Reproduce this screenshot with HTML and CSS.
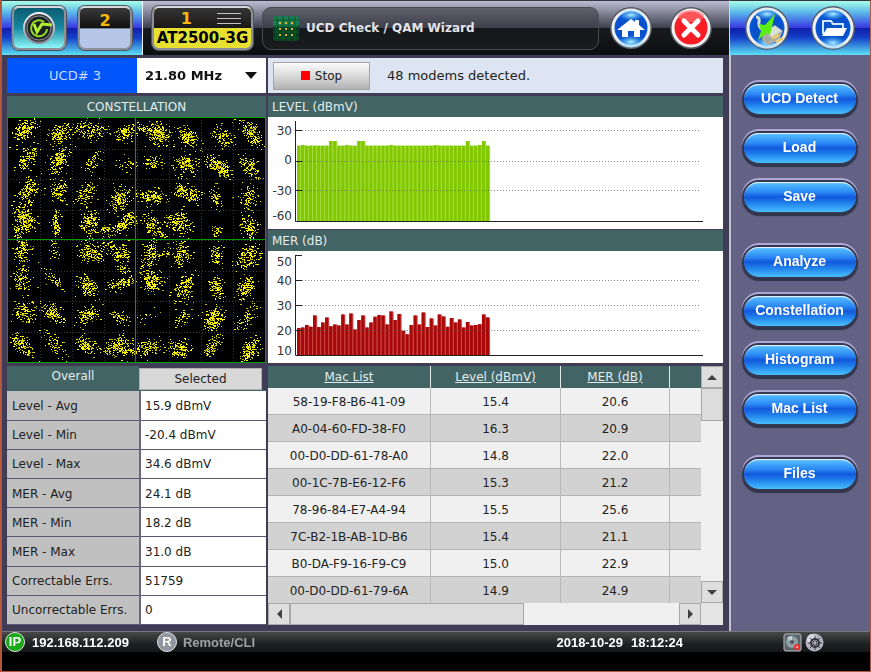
FILE: index.html
```html
<!DOCTYPE html>
<html lang="en">

<head>
    <meta charset="UTF-8">
    <meta name="viewport" content="width=device-width, initial-scale=1.0">
    <title>UCD Check / QAM Wizard</title>
    <link rel="stylesheet" href="styles.css">
</head>

<body>

    <div class="device">
        <header class="topbar">
            <div class="blue-zone slots">
                <button class="slot slot-check" aria-label="System">
                    <svg width="36" height="36" viewBox="0 0 36 36">
                        <defs>
                            <linearGradient id="metal" x1="0" y1="0" x2="0" y2="1">
                                <stop offset="0" stop-color="#f4f4f8" />
                                <stop offset="1" stop-color="#888c96" />
                            </linearGradient>
                            <radialGradient id="blueBall" cx="0.5" cy="0.5" r="0.6">
                                <stop offset="0" stop-color="#0a56c8" />
                                <stop offset="0.6" stop-color="#0650cc" />
                                <stop offset="1" stop-color="#0a64e0" />
                            </radialGradient>
                            <radialGradient id="glow">
                                <stop offset="0" stop-color="#b4f4ff" />
                                <stop offset="1" stop-color="#40b0ff" stop-opacity="0" />
                            </radialGradient>
                        </defs>
                        <circle cx="18" cy="18" r="15" fill="#3c4046" stroke="url(#metal)" stroke-width="2" />
                        <circle cx="18" cy="18" r="12" fill="#1c2024" stroke="#8c9098" stroke-width="1" />
                        <path d="M26 19a8 8 0 1 1-3-7" fill="none" stroke="#8ed820" stroke-width="2" />
                        <path d="M13 14l3 8 5-8 10 1" fill="none" stroke="#b4ee30" stroke-width="3" />
                    </svg>
                </button>
                <button class="slot slot-two">2</button>
            </div>
            <button class="module">
                <span class="module-top">1
                    <svg width="26" height="14" viewBox="0 0 26 14">
                        <path d="M1 2.500h24M1 7.500h24M1 12.500h24" stroke="#c4c4c8" stroke-width="1" />
                    </svg>
                </span>
                <span class="module-name">AT2500-3G</span>
            </button>
            <div class="title-box">
                <svg width="26" height="25" viewBox="0 0 26 25">
                    <rect width="26" height="25" rx="2" fill="#083c24" />
                    <rect width="26" height="11" rx="2" fill="#1e7a58" />
                    <path d="M4 0v25M10 0v25M16 0v25M22 0v25M0 4h26M0 10h26M0 16h26M0 22h26" stroke="#0a5c20"
                        stroke-width="1" />
                    <path d="M6 7h2M12 7h2M18 7h2M6 13h2M12 13h2M18 13h2M6 19h2M12 19h2M18 19h2" stroke="#e8b820"
                        stroke-width="2" />
                </svg>
                <h1>UCD Check / QAM Wizard</h1>
            </div>
            <button class="round" aria-label="Home">
                <svg width="44" height="44" viewBox="0 0 44 44">
                    <circle cx="22" cy="22" r="21" fill="#55585e" />
                    <circle cx="22" cy="22" r="18" fill="url(#blueBall)" stroke="#f0f0f2" stroke-width="3" />
                    <ellipse cx="22" cy="9" rx="13" ry="6" fill="url(#glow)" />
                    <ellipse cx="22" cy="36" rx="14" ry="7" fill="url(#glow)" />
                    <path d="M8 24L22 13l4 3v-2h4v5l6 5-2 0-3 0v7h-6v-6h-6v6h-6v-7z" fill="#fff" />
                </svg>
            </button>
            <button class="round" aria-label="Close">
                <svg width="44" height="44" viewBox="0 0 44 44">
                    <circle cx="22" cy="22" r="21" fill="#55585e" />
                    <circle cx="22" cy="22" r="18" fill="#fa1c24" stroke="#f0f0f2" stroke-width="3" />
                    <ellipse cx="22" cy="10" rx="13" ry="6" fill="#ff7a80" opacity="0.6" />
                    <path d="M15 15l14 14M29 15L15 29" stroke="#fff" stroke-width="5" stroke-linecap="round" />
                </svg>
            </button>
        </header>

        <div class="blue-zone side-top">
            <button class="round" aria-label="Power">
                <svg width="46" height="46" viewBox="0 0 46 46">
                    <circle cx="23" cy="23" r="22" fill="#55606c" />
                    <circle cx="23" cy="23" r="19" fill="url(#blueBall)" stroke="#f0f0f2" stroke-width="3" />
                    <ellipse cx="23" cy="9" rx="13" ry="6" fill="url(#glow)" />
                    <ellipse cx="23" cy="38" rx="14" ry="7" fill="url(#glow)" />
                    <path d="M12 12q4 0 3 5t5 9" fill="none" stroke="#d8dcd8" stroke-width="3" />
                    <path d="M19 27l12-7 8 6-4 9-11 5-6-5z" fill="#a8aca4" />
                    <path d="M22 26l9-5 7 5-11 6z" fill="#dcded8" />
                    <path d="M28 33l7-3M32 37l7-4" stroke="#e8cc78" stroke-width="3" />
                    <path d="M31 9L21 20l-6-1 2 7-3 9 9-7 3 2z" fill="#5cee10" />
                </svg>
            </button>
            <button class="round" aria-label="Open folder">
                <svg width="46" height="46" viewBox="0 0 46 46">
                    <circle cx="23" cy="23" r="22" fill="#55606c" />
                    <circle cx="23" cy="23" r="19" fill="url(#blueBall)" stroke="#f0f0f2" stroke-width="3" />
                    <ellipse cx="23" cy="9" rx="13" ry="6" fill="url(#glow)" />
                    <ellipse cx="23" cy="38" rx="14" ry="7" fill="url(#glow)" />
                    <path d="M13 29V16h8l2 3h10v4" fill="none" stroke="#d4e6fa" stroke-width="2" />
                    <path d="M17 23h20l-4 8H12z" fill="#fff" />
                </svg>
            </button>
        </div>

        <main class="workspace">
            <div class="channel">
                <label for="freq">UCD# 3</label>
                <div class="select-wrap">
                    <select id="freq">
                        <option>21.80 MHz</option>
                    </select>
                </div>
            </div>
            <div class="status-row">
                <button class="stop">Stop</button>
                <span>48 modems detected.</span>
            </div>

            <section class="panel">
                <h2 class="centered">CONSTELLATION</h2>
                <canvas id="constellation" width="257" height="244"></canvas>
            </section>

            <section class="charts">
                <div class="panel">
                    <h2>LEVEL (dBmV)</h2>
                    <svg class="chart" id="levelChart" viewBox="0 0 455 112"></svg>
                </div>
                <div class="panel">
                    <h2>MER (dB)</h2>
                    <svg class="chart" id="merChart" viewBox="0 0 455 112"></svg>
                </div>
            </section>

            <section class="summary">
                <div class="tabs">
                    <button class="tab active">Overall</button>
                    <button class="tab">Selected</button>
                </div>
                <table class="stats">
                    <tr><th scope="row">Level - Avg</th><td>15.9 dBmV</td></tr>
                    <tr><th scope="row">Level - Min</th><td>-20.4 dBmV</td></tr>
                    <tr><th scope="row">Level - Max</th><td>34.6 dBmV</td></tr>
                    <tr><th scope="row">MER - Avg</th><td>24.1 dB</td></tr>
                    <tr><th scope="row">MER - Min</th><td>18.2 dB</td></tr>
                    <tr><th scope="row">MER - Max</th><td>31.0 dB</td></tr>
                    <tr><th scope="row">Correctable Errs.</th><td>51759</td></tr>
                    <tr><th scope="row">Uncorrectable Errs.</th><td>0</td></tr>
                </table>
            </section>

            <section class="mac-list">
                <div class="mac-view">
                    <table class="mac-table">
                        <thead>
                            <tr>
                                <th class="col-mac">Mac List</th>
                                <th class="col-level">Level (dBmV)</th>
                                <th class="col-mer">MER (dB)</th>
                                <th></th>
                            </tr>
                        </thead>
                        <tbody id="macRows"></tbody>
                    </table>
                </div>
                <div class="vscroll">
                    <button class="up" aria-label="Scroll up"></button>
                    <div class="thumb"></div>
                    <button class="down" aria-label="Scroll down"></button>
                </div>
                <div class="hscroll">
                    <button class="left" aria-label="Scroll left"></button>
                    <div class="thumb"></div>
                    <button class="right" aria-label="Scroll right"></button>
                </div>
            </section>
        </main>

        <nav class="side">
            <div class="group">
                <button>UCD Detect</button>
                <button>Load</button>
                <button>Save</button>
            </div>
            <div class="group">
                <button>Analyze</button>
                <button>Constellation</button>
                <button>Histogram</button>
                <button>Mac List</button>
            </div>
            <div class="group">
                <button>Files</button>
            </div>
        </nav>

        <footer class="statusbar">
            <span class="badge ip">IP</span>
            <span class="address">192.168.112.209</span>
            <span class="badge remote">R</span>
            <span class="muted">Remote/CLI</span>
            <span class="clock"><span>2018-10-29</span><span>18:12:24</span></span>
            <svg width="19" height="19" viewBox="0 0 19 19">
                <rect x="1" y="1" width="17" height="17" rx="2" fill="#5c666a" stroke="#b8b8bc" stroke-width="1" />
                <circle cx="9" cy="9" r="6" fill="#8fa0a4" />
                <path d="M9 9L4 5a6 6 0 0 1 5-2z" fill="#c4d0d4" />
                <circle cx="9" cy="9" r="2" fill="#48565c" />
                <circle cx="14" cy="14" r="3" fill="#f03030" />
                <path d="M13 14h2" stroke="#fff" stroke-width="1" />
            </svg>
            <svg width="19" height="19" viewBox="0 0 19 19">
                <circle cx="9.500" cy="9.500" r="9" fill="#b4b2c0" />
                <circle cx="7" cy="6" r="5" fill="#d8d8e2" />
                <circle cx="10" cy="10" r="4" fill="none" stroke="#30343c" stroke-width="2" />
                <path d="M10 3v14M3 10h14M5 5l10 10M15 5L5 15" stroke="#30343c" stroke-width="1" />
                <circle cx="10" cy="10" r="1" fill="#e0e0e8" />
            </svg>
        </footer>
    </div>

    <script src="script.js"></script>
</body>

</html>
```

FILE: styles.css
```css
* {
    box-sizing: border-box;
}

body {
    margin: 0;
    background: #000;
    font-family: "DejaVu Sans", Verdana, sans-serif;
    font-size: 12px;
    color: #222;
}

button,
select {
    font: inherit;
    margin: 0;
    padding: 0;
    border: 0;
}

h1,
h2 {
    margin: 0;
    font-size: 12px;
}

.device {
    display: grid;
    grid-template-columns: 1fr 141px;
    grid-template-rows: 55px 1fr auto;
    min-height: 100vh;
    border: solid #b4563a;
    border-width: 0 1px 1px 2px;
    background: #000;
}

/* Top bar */
.topbar {
    display: flex;
    align-items: center;
    padding-right: 16px;
    border-top: 1px solid #35354a;
    background: linear-gradient(#bcbcd0, #3e4150 49%, #181a1e 50%, #0c0e10);
}

.blue-zone {
    display: flex;
    align-items: center;
    background: linear-gradient(#a8ffe6, #58b4ea 22%, #3a3ae4 49%, #101ea8 50%, #1440c8 68%, #5ee0f4);
}

.slots {
    gap: 12px;
    width: 141px;
    height: 54px;
    padding-left: 10px;
    border-right: 1px solid #f0f4f8;
}

.slot,
.module {
    border: 2px solid #8c9098;
    border-top-color: #d4d8dc;
    border-radius: 7px;
    box-shadow: 0 0 0 1px #50545c;
}

.slot {
    width: 54px;
    height: 44px;
}

.slot svg {
    display: block;
    margin: auto;
}

.slot-check {
    background: linear-gradient(#0c5c70, #1688a0 50%, #90f8fa);
}

.slot-two {
    padding-bottom: 16px;
    background: linear-gradient(#3a3a3a, #101010 50%, #b6c6e8 52%);
    color: #f8b80c;
    font-size: 16px;
    font-weight: bold;
}

.module {
    width: 101px;
    height: 44px;
    margin: 0 9px;
    overflow: hidden;
    background: #e8e030;
}

.module-top {
    display: flex;
    align-items: center;
    justify-content: flex-end;
    gap: 24px;
    height: 20px;
    padding-right: 9px;
    background: linear-gradient(#343434, #1c1818);
    color: #f8b80c;
    font-size: 16px;
    font-weight: bold;
}

.module-name {
    display: block;
    height: 20px;
    line-height: 20px;
    color: #000;
    font-size: 15px;
    font-weight: bold;
}

.title-box {
    display: flex;
    flex: 1;
    align-items: center;
    gap: 7px;
    height: 43px;
    margin-right: 10px;
    padding-left: 10px;
    border: 1px solid #484a50;
    border-radius: 9px;
    background: linear-gradient(#5e616c, #3c3e4a 49%, #15171a 50%, #191b1e);
    color: #e4e4e8;
}

.round {
    background: none;
}

.round svg {
    display: block;
}

.round + .round {
    margin-left: 16px;
}

.side-top {
    justify-content: center;
    border-top: 1px solid #35354a;
    border-left: 1px solid #d8d8e0;
}

.side-top .round + .round {
    margin-left: 20px;
}

/* Workspace */
.workspace {
    display: grid;
    grid-template-columns: 259px 1fr;
    grid-template-rows: 35px auto 1fr;
    gap: 3px 2px;
    padding: 3px 6px 6px 5px;
    background: #403c56;
}

.channel {
    display: flex;
    background: #fff;
    font-size: 13px;
}

.channel label {
    width: 130px;
    padding-left: 6px;
    background: #0055fc;
    color: #c8dcff;
    line-height: 36px;
    text-align: center;
}

.select-wrap {
    position: relative;
    flex: 1;
}

.select-wrap select {
    width: 100%;
    height: 100%;
    padding-left: 8px;
    appearance: none;
    background: #fff;
    color: #111;
    font-weight: bold;
}

.select-wrap::after {
    content: "";
    position: absolute;
    top: 14px;
    right: 9px;
    border: 6px solid transparent;
    border-top: 7px solid #111;
    border-bottom: 0;
    pointer-events: none;
}

.status-row {
    display: flex;
    align-items: center;
    gap: 17px;
    padding-left: 5px;
    background: #dce5f1;
    font-size: 13px;
}

.stop {
    width: 97px;
    height: 28px;
    border: 1px solid #a4a4a8;
    background: linear-gradient(#fbfbfb, #dadada 50%, #b2b2b2);
    color: #222;
    font-size: 12px;
}

.stop::before {
    content: "";
    display: inline-block;
    width: 9px;
    height: 9px;
    margin-right: 5px;
    background: #f00;
}

.panel {
    background: #fff;
}

.panel h2 {
    height: 21px;
    padding-left: 4px;
    background: #426464;
    color: #e2ecec;
    font-weight: normal;
    line-height: 22px;
}

.panel h2.centered {
    padding-left: 0;
    text-align: center;
}

#constellation {
    display: block;
    width: 100%;
    border: 1px solid #00a000;
    background: #000;
}

.charts {
    display: flex;
    flex-direction: column;
    justify-content: space-between;
    gap: 1px;
}

.chart {
    display: block;
    width: 100%;
}

.chart text {
    font-size: 12px;
    fill: #333;
    text-anchor: end;
}

/* Overall / Selected */
.summary {
    display: flex;
    flex-direction: column;
}

.tabs {
    display: flex;
    align-items: flex-end;
    height: 25px;
    border-bottom: 1px solid #426464;
}

.tab {
    width: 123px;
    height: 22px;
    border: 1px solid #b0b0b0;
    background: #d8d8d8;
    color: #222;
}

.tab.active {
    width: 132px;
    height: 24px;
    padding-bottom: 4px;
    border: 0;
    background: #426464;
    color: #e2ecec;
}

.stats {
    flex: 1;
    width: 100%;
    border-collapse: collapse;
    background: #fff;
}

.stats th,
.stats td {
    height: 29px;
    padding: 1px 4px 0;
    border-bottom: 1px solid #5a5674;
    font-weight: normal;
    text-align: left;
    white-space: nowrap;
}

.stats th {
    width: 133px;
    padding-left: 5px;
    border-right: 2px solid #6a6680;
    background: #c0c0c0;
}

/* Mac list */
.mac-list {
    display: grid;
    grid-template-columns: 1fr 22px;
    grid-template-rows: 1fr 22px;
    background: #e4e4e4;
}

.mac-view {
    height: 237px;
    overflow: hidden;
}

.mac-table {
    width: 100%;
    table-layout: fixed;
    border-collapse: separate;
    border-spacing: 0;
}

.col-mac {
    width: 163px;
}

.col-level {
    width: 130px;
}

.col-mer {
    width: 109px;
}

.mac-table th {
    height: 22px;
    padding: 0;
    border-right: 1px solid #e4ecec;
    background: #426464;
    color: #e2ecec;
    font-weight: normal;
    text-decoration: underline;
}

.mac-table td {
    height: 27px;
    padding: 1px 0 0;
    border-right: 1px solid #b8b8b8;
    border-bottom: 1px solid #b4b4b4;
    background: #f0f0f0;
    text-align: center;
}

.mac-table th:last-child,
.mac-table td:last-child {
    border-right: 0;
}

.mac-table tr:nth-child(even) td {
    background: #d2d2d2;
}

.vscroll,
.hscroll {
    display: flex;
    background: #f0f0f0;
}

.vscroll {
    flex-direction: column;
}

.hscroll {
    grid-column: 1;
}

.vscroll button,
.hscroll button {
    display: flex;
    align-items: center;
    justify-content: center;
    flex: none;
    width: 22px;
    height: 22px;
    border: 1px solid #a8a8a8;
    background: #dedede;
}

.vscroll button::before,
.hscroll button::before {
    content: "";
    border: 5px solid transparent;
}

.vscroll .up::before {
    border-top: 0;
    border-bottom-color: #404040;
}

.vscroll .down::before {
    border-bottom: 0;
    border-top-color: #404040;
}

.hscroll .left::before {
    border-left: 0;
    border-right-color: #404040;
}

.hscroll .right::before {
    border-right: 0;
    border-left-color: #404040;
}

.thumb {
    border: 1px solid #a8a8a8;
    background: #dcdcdc;
}

.vscroll .thumb {
    height: 33px;
}

.hscroll .thumb {
    width: 54%;
}

.vscroll .down,
.hscroll .right {
    margin-top: auto;
    margin-left: auto;
}

/* Right-hand menu */
.side {
    display: flex;
    flex-direction: column;
    align-items: center;
    gap: 35px;
    padding-top: 29px;
    padding-right: 2px;
    border-left: 2px solid #c4c4d0;
    background: #646284;
}

.group {
    display: flex;
    flex-direction: column;
    gap: 19px;
}

.group button {
    width: 112px;
    height: 30px;
    padding-bottom: 3px;
    border-radius: 15px;
    background: linear-gradient(#58c4ff, #2a86f4 35%, #1258dc 50%, #2080ec 70%, #48c0fc);
    box-shadow: inset 0 2px 1px -1px #f4f4fa, 0 0 0 2px #343850, 0 2px 1px 2px #30344a, 0 -2px 0 2px #b0a8d4;
    color: #fff;
    font-family: "Liberation Sans", Arial, sans-serif;
    font-size: 14px;
    font-weight: bold;
}

/* Bottom bar */
.statusbar {
    grid-column: 1 / -1;
    display: flex;
    align-items: center;
    height: 21px;
    margin-bottom: 19px;
    padding: 0 46px 0 3px;
    border-top: 1px solid #77747c;
    background: linear-gradient(#4a4848, #1c2222 60%, #141818);
    color: #fff;
    font-family: "Liberation Sans", Arial, sans-serif;
    font-size: 13px;
    font-weight: bold;
}

.badge {
    width: 20px;
    height: 20px;
    margin-right: 7px;
    border: 1px solid #e0e0e0;
    border-radius: 50%;
    line-height: 18px;
    text-align: center;
}

.ip {
    background: #18a818;
}

.remote {
    margin-left: 28px;
    margin-right: 6px;
    background: #9296a0;
}

.muted {
    color: #a0a0a0;
}

.clock {
    display: flex;
    gap: 8px;
    margin-left: auto;
    margin-right: 100px;
}

.statusbar svg + svg {
    margin-left: 3px;
}
```

FILE: script.js
```js
const macData = [
    ["58-19-F8-B6-41-09", "15.4", "20.6"],
    ["A0-04-60-FD-38-F0", "16.3", "20.9"],
    ["00-D0-DD-61-78-A0", "14.8", "22.0"],
    ["00-1C-7B-E6-12-F6", "15.3", "21.2"],
    ["78-96-84-E7-A4-94", "15.5", "25.6"],
    ["7C-B2-1B-AB-1D-B6", "15.4", "21.1"],
    ["B0-DA-F9-16-F9-C9", "15.0", "22.9"],
    ["00-D0-DD-61-79-6A", "14.9", "24.9"]
];

const merData = [
    20.8, 21, 22, 21.3, 25.8, 21.2, 23, 25, 21.5, 22.2, 21.8, 26.2, 22.2, 26.6, 20.2, 24,
    25.8, 21, 23, 25.3, 26, 25.8, 22.2, 27.4, 24, 26.4, 19.7, 18.3, 22, 25.8, 22.2, 27,
    21.2, 24.6, 21.8, 26.2, 25.4, 21.3, 24.8, 23, 24.2, 21, 23.2, 21.8, 22, 22.3, 26.2, 25
];

// Level is flat except for a few modems
const levelData = merData.map((v, i) => [8, 9, 15, 16, 42, 46].includes(i) ? 20 : (i % 11 === 1 ? 16 : 15.3));

// x, y, spread x, spread y, slope, number of symbols
const clusters = [
    [51, 35, 16, 15, -0.4, 140], [151, 46, 14, 14, -0.3, 110], [251, 38, 26, 13, 0, 110], [348, 43, 15, 11, -0.2, 90],
    [448, 45, 18, 15, 0.2, 180], [538, 56, 15, 14, 0.3, 130], [641, 56, 15, 14, 0.3, 90], [728, 43, 15, 16, 0.7, 130],
    [54, 126, 15, 15, -0.7, 90], [154, 123, 13, 16, -0.6, 150], [251, 128, 12, 12, -0.7, 50], [358, 141, 14, 10, 0, 28],
    [431, 133, 14, 9, 0, 55], [529, 141, 17, 14, 0, 120], [631, 145, 17, 12, 0.5, 150], [724, 145, 16, 14, 0.6, 90],
    [60, 221, 13, 19, -0.5, 125], [151, 218, 13, 18, 0, 90], [234, 221, 13, 16, -0.6, 90], [334, 241, 14, 17, -0.3, 130],
    [431, 236, 22, 11, 0, 120], [538, 223, 20, 13, 0.3, 110], [621, 238, 9, 15, 0.5, 45], [721, 238, 13, 18, -0.1, 80],
    [51, 305, 15, 16, 0.3, 170], [143, 313, 6, 18, 0, 70], [246, 313, 12, 19, -0.1, 120], [341, 321, 16, 10, -0.5, 100],
    [431, 318, 14, 17, 0.5, 95], [511, 315, 19, 15, 0.2, 135], [624, 343, 7, 9, 0, 26], [724, 325, 12, 16, 0, 90],
    [43, 400, 12, 17, 0, 90], [138, 393, 7, 18, 0, 22], [251, 403, 20, 15, 0, 140], [341, 408, 11, 16, 0, 75],
    [426, 408, 12, 19, -0.5, 95], [519, 408, 12, 20, -0.1, 115], [626, 408, 8, 14, 0, 60], [718, 418, 17, 18, -0.4, 140],
    [41, 488, 14, 20, 0, 90], [141, 486, 15, 10, 0.6, 45], [238, 503, 15, 14, 0.4, 115], [341, 495, 21, 8, -0.2, 90],
    [431, 490, 15, 17, 0, 150], [528, 508, 14, 16, -0.5, 120], [624, 505, 11, 15, 0.2, 95], [711, 508, 13, 15, -0.6, 115],
    [48, 583, 15, 14, 0.3, 90], [131, 583, 16, 11, 0.4, 110], [238, 591, 17, 13, -0.2, 100], [336, 598, 13, 9, 0.3, 50],
    [414, 593, 18, 8, -0.4, 14], [521, 598, 13, 12, -0.4, 38], [616, 603, 14, 17, -0.5, 155], [714, 598, 14, 13, -0.8, 65],
    [41, 678, 17, 14, 0.6, 110], [136, 678, 16, 14, 0.7, 60], [231, 678, 15, 11, 0.4, 95], [326, 683, 19, 13, -0.2, 145],
    [421, 688, 16, 12, -0.1, 100], [511, 691, 18, 13, 0.1, 110], [611, 683, 13, 12, -0.7, 70], [724, 695, 15, 14, -0.6, 120],
    // smear between neighbouring symbols
    [190, 30, 18, 6, -0.3, 20], [400, 33, 14, 4, 0.1, 25], [518, 213, 7, 7, 0.2, 35], [365, 294, 8, 5, 0, 30],
    [293, 330, 11, 6, -0.3, 35], [305, 385, 10, 10, 0.5, 35], [345, 452, 8, 7, 0, 25], [470, 405, 11, 6, -0.2, 25],
    [30, 340, 7, 12, 0, 35], [460, 345, 9, 5, 0.6, 25], [365, 700, 14, 5, 0.3, 35]
];

let seed = 48;
function random() {
    seed = (seed * 16807) % 2147483647;
    return seed / 2147483647;
}

// Dense middle with a few stray symbols further out
function gauss() {
    const wide = random() < 0.15 ? 2.6 : 1.7;
    return (random() + random() + random() + random() - 2) * wide;
}

function drawConstellation() {
    const canvas = document.getElementById("constellation");
    const ctx = canvas.getContext("2d");
    const w = canvas.width;
    const h = canvas.height;

    // Dotted decision grid
    ctx.fillStyle = "#3a3a3a";
    for (let i = 1; i < 8; i++) {
        const gx = Math.round(i * w / 8);
        const gy = Math.round(i * h / 8);
        for (let y = 2; y < h; y += 3) ctx.fillRect(gx, y, 1, 1);
        for (let x = 2; x < w; x += 3) ctx.fillRect(x, gy, 1, 1);
    }

    for (const [cx, cy, sx, sy, slope, n] of clusters) {
        for (let i = 0; i < n * 1.2; i++) {
            const dx = gauss() * sx;
            const dy = gauss() * sy + dx * slope;
            const x = Math.round((cx + dx) / 3);
            const y = Math.round((cy + dy) / 3);
            ctx.fillStyle = random() < 0.65 ? "#ffff00" : "#b8b800";
            ctx.fillRect(x, y, random() < 0.25 ? 2 : 1, 1);
        }
        if (n > 135) {
            ctx.fillStyle = "#ff8000";
            ctx.fillRect(Math.round(cx / 3), Math.round(cy / 3), 2, 1);
        }
    }

    // Axes
    ctx.fillStyle = "#00a000";
    ctx.fillRect(127, 0, 1, h);
    ctx.fillRect(0, 121, w, 1);
}

// ticks: [label, line y, label centre y]
function drawChart(id, data, ticks, top, bottom, scale, min, dark, light) {
    let out = "";
    data.forEach((value, i) => {
        const x = 29 + i * 193 / 48;
        const height = (value - min) * scale;
        out += `<rect x="${x}" y="${bottom - height}" width="4.100" height="${height}" fill="${light}"/>`;
        out += `<rect x="${x}" y="${bottom - height}" width="3" height="${height}" fill="${dark}"/>`;
    });
    ticks.forEach(([label, y, textY]) => {
        out += `<text x="24" y="${textY + 4}">${label}</text>`;
        if (y > top && y < bottom) {
            out += `<path d="M34 ${y}.5H433" stroke="#555" stroke-opacity="0.7" stroke-dasharray="1 2"/>`;
        }
        if (y < bottom) {
            out += `<path d="M28 ${y}.5h6" stroke="#222"/>`;
        }
    });
    out += `<path d="M27.5 ${top}V${bottom}.5H435" fill="none" stroke="#222"/>`;
    document.getElementById(id).innerHTML = out;
}

function fillMacTable() {
    const body = document.getElementById("macRows");
    macData.forEach((modem) => {
        const row = body.insertRow();
        modem.forEach((value) => {
            row.insertCell().textContent = value;
        });
        row.insertCell();
    });
}

drawConstellation();
drawChart("levelChart", levelData, [["30", 13, 14], ["0", 44, 43], ["-30", 73, 74], ["-60", 104, 99]],
    4, 104, 1, -60, "#82c800", "#a4dc40");
drawChart("merChart", merData, [["50", 4, 11], ["40", 29, 30], ["30", 54, 55], ["20", 79, 80], ["10", 104, 100]],
    4, 104, 2.5, 10, "#a80808", "#c84848");
fillMacTable();
```
